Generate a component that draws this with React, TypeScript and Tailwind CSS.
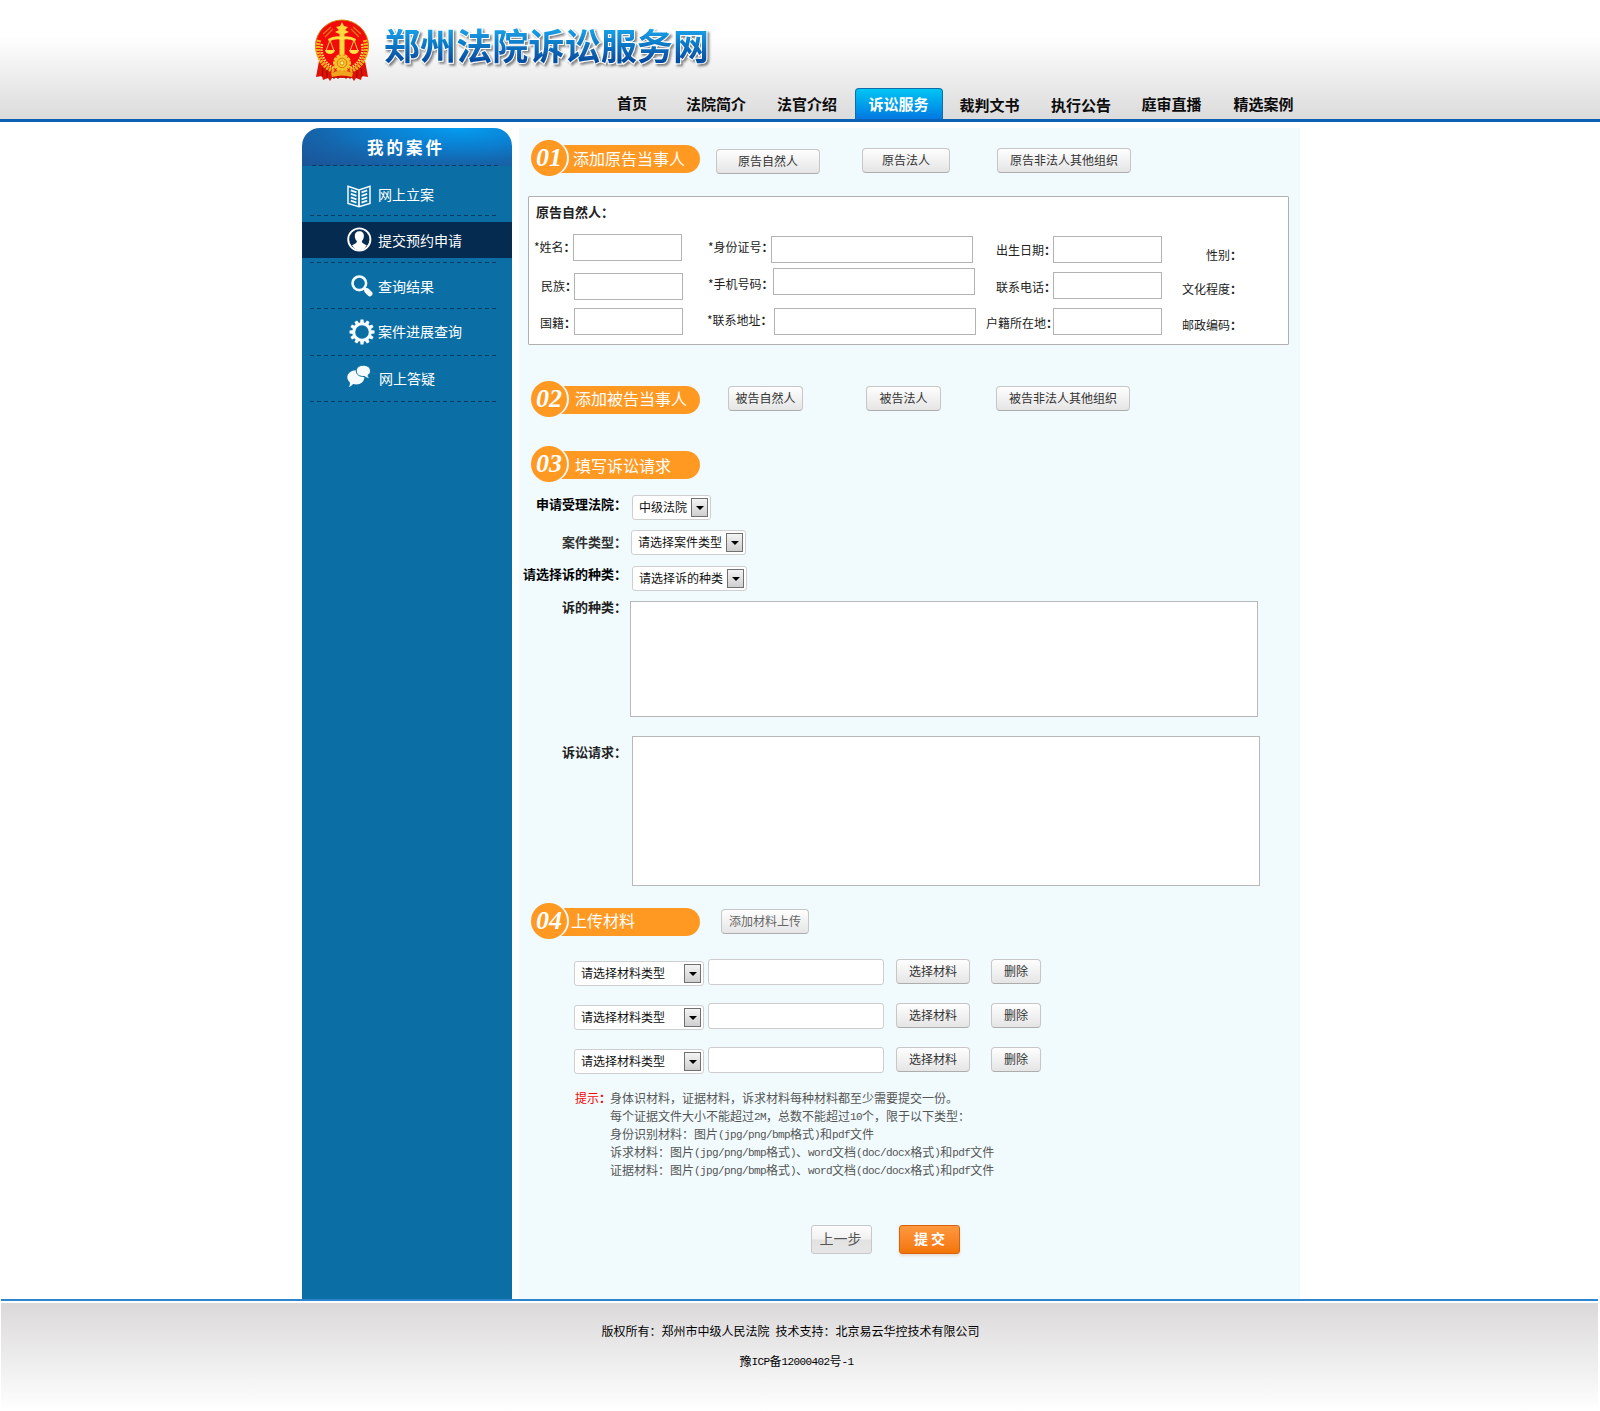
import React from "react";

const sans = "font-['Noto_Sans_CJK_SC','Liberation_Sans',sans-serif]";

/* Latin runs are set in a 6px-pitch monospace face between 12px Chinese glyphs. */
function Mixed({ text }: { text: string }) {
  return (
    <>
      {text.split(/([\x20-\x7e]+)/).map((part, i) =>
        /^[\x20-\x7e]+$/.test(part) ? (
          <span key={i} className="align-[1px] font-['Liberation_Mono',monospace] text-[11px] leading-none tracking-[-0.6px] whitespace-pre">{part}</span>
        ) : (
          <span key={i}>{part}</span>
        )
      )}
    </>
  );
}

/* Label text followed by a heavier full-width colon in its own one-em box. */
function Colon({ text }: { text: string }) {
  return (
    <>
      {text}
      <span className="inline-block w-[1em] text-left font-bold">：</span>
    </>
  );
}

function Emblem() {
  const teeth = Array.from({ length: 12 }, (_, i) => i * 30);
  return (
    <svg width="56" height="63" viewBox="0 0 56 63">
      <path d="M5 42 L2 58 L8 57 L9 61 L14 59 L16 62 L18 59 H38 L40 62 L42 59 L47 61 L48 57 L54 58 L51 42Z" fill="#e01208" />
      <path d="M9 49l-1 9M13 50l0 9M43 50l0 9M47 49l1 9M20 55v5M24 56v4M32 56v4M36 55v5" stroke="#8f0d05" strokeWidth="1" />
      <ellipse cx="28" cy="27" rx="26.5" ry="26" fill="#f30b0b" stroke="#d6850e" strokeWidth="1" />
      <path d="M5 21 C1 36 8 48 20 52 M51 21 C55 36 48 48 36 52" fill="none" stroke="#f2b21c" strokeWidth="4.5" strokeDasharray="2 1" />
      <path d="M8 25 C6 36 11 45 20 49 M48 25 C50 36 45 45 36 49" fill="none" stroke="#ffe45c" strokeWidth="2.5" strokeDasharray="1.5 1.2" />
      <path d="M9 15 L17 8 M11 18 L19 10 M47 15 L39 8 M45 18 L37 10" stroke="#dd7b14" strokeWidth="1.2" />
      <path d="M28 3 L30 7 L34 8 L31 11 L35 13 L30.5 15 L30.5 36 H25.5 L25.5 15 L21 13 L25 11 L22 8 L26 7Z" fill="#ffd83a" />
      <path d="M14 20 Q21 16 28 18 Q35 16 42 20 L41 22.5 Q34 19 28 21 Q22 19 15 22.5Z" fill="#ffdf45" />
      <path d="M16 21 L12 32 M16 21 L20 32 M40 21 L36 32 M40 21 L44 32" stroke="#ffcf3a" strokeWidth="1" />
      <path d="M11 31 H21 Q20 35 16 35 Q12 35 11 31Z M35 31 H45 Q44 35 40 35 Q36 35 35 31Z" fill="#ffdf45" />
      {teeth.map((a) => (
        <rect key={a} x="26.3" y="35" width="3.4" height="4" fill="#f7c32a" transform={`rotate(${a} 28 44)`} />
      ))}
      <circle cx="28" cy="44" r="7.5" fill="#f7c32a" />
      <circle cx="28" cy="44" r="4.8" fill="none" stroke="#d9780f" strokeWidth="1" />
      <circle cx="28" cy="44" r="2" fill="#ffec80" stroke="#d9780f" strokeWidth="0.8" />
      <path d="M17 54 Q28 50 39 54 L38 58 Q28 55 18 58Z" fill="#f0a51d" />
    </svg>
  );
}

function BookIcon() {
  return (
    <svg width="24" height="23" viewBox="0 0 24 23" fill="none" stroke="#f3f9fc" strokeWidth="1.5">
      <path d="M12 5 L1 1.2 V18.5 L12 21.8 L23 18.5 V1.2 Z" />
      <path d="M12 5 V21" strokeWidth="1.8" />
      <path d="M3.8 5.4l5.7 2M3.8 8.9l5.7 2M3.8 12.4l5.7 2M3.8 15.6l5.7 2M20.2 5.4l-5.7 2M20.2 8.9l-5.7 2M20.2 12.4l-5.7 2M20.2 15.6l-5.7 2" strokeWidth="1.7" />
    </svg>
  );
}

function UserIcon() {
  return (
    <svg width="25" height="25" viewBox="0 0 25 25" className="-mt-px">
      <circle cx="12.3" cy="12.5" r="11.1" fill="none" stroke="#fff" strokeWidth="1.9" />
      <path d="M12.3 4.2 C15.6 4.2 17.1 6.3 16.9 9.2 C16.8 11.4 16 13 14.8 14 C14.6 16.2 16.5 16.6 19.7 18.3 C17.8 21.6 15.3 23.2 12.3 23.2 C9.4 23.2 6.9 21.6 5 18.3 C8.2 16.6 10.1 16.2 9.9 14 C8.7 13 7.9 11.4 7.8 9.2 C7.6 6.3 9.1 4.2 12.3 4.2Z" fill="#fff" />
    </svg>
  );
}

function SearchIcon() {
  return (
    <svg width="22" height="22" viewBox="0 0 22 22" fill="none" stroke="#f5fbfe" className="-mt-[2px]">
      <circle cx="8.3" cy="8.3" r="6.8" strokeWidth="2.6" />
      <path d="M13 13 L15 15" strokeWidth="2.5" />
      <path d="M16 15.8 L18.8 18.6" strokeWidth="5.4" strokeLinecap="round" />
    </svg>
  );
}

function GearIcon() {
  const teeth = Array.from({ length: 12 }, (_, i) => i * 30);
  return (
    <svg width="26" height="26" viewBox="0 0 26 26">
      {teeth.map((a) => (
        <path key={a} d="M10.9 5 L11.5 0.5 H14.5 L15.1 5Z" fill="#f5fbfe" transform={`rotate(${a} 13 13)`} />
      ))}
      <circle cx="13" cy="13" r="8.3" fill="none" stroke="#f5fbfe" strokeWidth="3" />
    </svg>
  );
}

function ChatIcon() {
  return (
    <svg width="24" height="23" viewBox="0 0 24 23" className="-mt-[4px]">
      <path d="M9 5.2 C13.8 5.2 17.3 8.4 17.3 12.3 C17.3 16.5 13.7 19.5 9.5 19.5 C8 19.5 7 19.3 6 19 C5 20.4 3.8 21.6 1.8 22 C2.7 20.6 3.1 19 2.9 17.4 C1.3 16 0.3 14.5 0.3 12.3 C0.3 8.4 4.2 5.2 9 5.2Z" fill="#f5fbfe" />
      <path d="M16.3 0.3 C20.5 0.3 23.5 2.6 23.5 5.9 C23.5 7.9 22.4 9.3 21.1 10.1 C21.1 11.6 21.7 12.6 22.8 13.5 C20.5 13.5 18.9 12.8 17.9 11.5 C12.2 11.9 9.3 9.3 9.3 5.9 C9.3 2.6 12.2 0.3 16.3 0.3Z" fill="#f5fbfe" stroke="#0b6fa5" strokeWidth="1" />
    </svg>
  );
}

function Dashes({ className = "" }: { className?: string }) {
  return <div className={`h-px bg-[repeating-linear-gradient(90deg,#0a3c62_0_4px,transparent_4px_7px)] ${className}`} />;
}

const nav = [
  { label: "首页", cls: "ml-[617px] w-[31px] -mt-px" },
  { label: "法院简介", cls: "ml-[38px] w-[61px]" },
  { label: "法官介绍", cls: "ml-[30px] w-[61px]" },
];
const navAfter = [
  { label: "裁判文书", cls: "ml-[16.5px] w-[60px] pt-px" },
  { label: "执行公告", cls: "ml-[31.5px] w-[60px] pt-px" },
  { label: "庭审直播", cls: "ml-[30.5px] w-[60px]" },
  { label: "精选案例", cls: "ml-[32px] w-[61px]" },
];

function Header() {
  return (
    <header className="h-[122px] border-b-[3px] border-[#0b62b4] bg-[linear-gradient(180deg,#ffffff_0%,#ffffff_30%,#dcdbdc_100%)]">
      <div className="flex h-[88px] pl-[314px]">
        <div className="pt-[19px]"><Emblem /></div>
        <svg width="350" height="60" viewBox="0 0 350 60" className="mt-[16px] ml-[6px]">
          <defs>
            <linearGradient id="title" x1="0" y1="0" x2="0" y2="1">
              <stop offset="0.2" stopColor="#18a4ea" />
              <stop offset="0.8" stopColor="#064fa3" />
            </linearGradient>
            <filter id="shade" x="-5%" y="-20%" width="112%" height="150%">
              <feDropShadow dx="2" dy="2" stdDeviation="1.2" floodColor="#555" floodOpacity="0.7" />
            </filter>
          </defs>
          <text x="8" y="44" textLength="325" fontSize="36" fontWeight="bold" fontFamily="'Noto Sans CJK SC', sans-serif" fill="url(#title)" stroke="#fff" strokeWidth="2" paintOrder="stroke" filter="url(#shade)">
            郑州法院诉讼服务网
          </text>
        </svg>
      </div>
      <nav className="flex h-[31px] text-[15px] leading-[31px] font-bold whitespace-nowrap text-[#0c0c0c]">
        {nav.map((n) => <a key={n.label} className={n.cls}>{n.label}</a>)}
        <a className="ml-[17px] h-[31px] w-[88px] rounded-t-[4px] border border-b-0 border-[#0a6fa8] bg-linear-to-b from-[#04c5f2] to-[#0678e2] pr-px text-center leading-[29px] text-white">诉讼服务</a>
        {navAfter.map((n) => <a key={n.label} className={n.cls}>{n.label}</a>)}
      </nav>
    </header>
  );
}

function Sidebar() {
  const item = "flex items-center text-[14px] leading-[20px] text-white";
  return (
    <aside className="h-[1171px] w-[210px] bg-[#0b6fa5]">
      <div className="bg-white">
        <div className="flex h-[38px] flex-col rounded-t-[18px] bg-[radial-gradient(ellipse_at_75%_0%,#049cf0_0%,#0b7fd0_35%,#1565ab_65%,#1c5297_100%)]">
          <h2 className="h-[37px] pl-[65px] text-[16.5px] leading-[38px] font-bold tracking-[3px] text-white">我的案件</h2>
          <Dashes className="mr-[12px] ml-[10px]" />
        </div>
      </div>
      <div className={`${item} h-[49px] pt-[11px] pl-[45px]`}><BookIcon /><span className="-mt-[5px] ml-[7px]">网上立案</span></div>
      <Dashes className="mr-[13px] ml-[8px]" />
      <div className={`${item} mt-[6px] h-[36px] bg-[#062b50] pl-[45px]`}><UserIcon /><span className="ml-[6px]">提交预约申请</span></div>
      <Dashes className="mt-[4px] mr-[13px] ml-[8px]" />
      <div className={`${item} h-[45px] pt-[2px] pl-[49px]`}><SearchIcon /><span className="-mt-[2px] ml-[5px]">查询结果</span></div>
      <Dashes className="mr-[13px] ml-[8px]" />
      <div className={`${item} h-[46px] pl-[47px]`}><GearIcon /><span className="-mt-[2px] ml-[3px]">案件进展查询</span></div>
      <Dashes className="mr-[13px] ml-[8px]" />
      <div className={`${item} h-[45px] pl-[45px]`}><ChatIcon /><span className="-mt-[2px] ml-[8px]">网上答疑</span></div>
      <Dashes className="mr-[13px] ml-[8px]" />
    </aside>
  );
}

function Badge({ num, text, textCls = "" }: { num: string; text: string; textCls?: string }) {
  return (
    <div className="flex h-[36px] w-[169px] items-start">
      <div className="relative z-10 flex size-[36px] shrink-0 items-center justify-center rounded-full bg-[#ff9922] font-['Liberation_Serif',serif] text-[26px] leading-none font-bold text-white italic shadow-[2px_0_0_#f1fbfe]">
        {num}
      </div>
      <div className={`mt-[5px] -ml-[10px] h-[28px] flex-1 rounded-r-full bg-[#ff9922] text-[16px] whitespace-nowrap text-white ${textCls}`}>{text}</div>
    </div>
  );
}

function Btn({ children, className = "" }: { children: React.ReactNode; className?: string }) {
  return (
    <button className={`block h-[25px] shrink-0 rounded-[4px] border border-[#c6c6c6] border-b-[#adadad] bg-linear-to-b from-[#fefefe] to-[#e6e5e6] pb-[2px] text-center text-[12px] leading-[21px] whitespace-nowrap ${className}`}>
      {children}
    </button>
  );
}

function Field({ label, className, labelCls, inputCls }: { label: string; className: string; labelCls: string; inputCls?: string }) {
  return (
    <label className={`flex text-[12px] leading-[25px] whitespace-nowrap text-[#222] ${className}`}>
      <span className={`h-[27px] shrink-0 ${labelCls}`}><Colon text={label} /></span>
      {inputCls && <span className={`h-[27px] shrink-0 border border-[#b3b3b3] bg-white ${inputCls}`} />}
    </label>
  );
}

function Select({ children, className = "" }: { children: React.ReactNode; className?: string }) {
  return (
    <div className={`flex h-[25px] shrink-0 items-center justify-between rounded-[3px] border border-[#cfcfcf] bg-white pr-[2px] pl-[6px] text-[12px] whitespace-nowrap text-[#111] ${className}`}>
      <span className="h-[23px] leading-[21px]">{children}</span>
      <span className="flex h-[19px] w-[17px] items-center justify-center border border-[#707070] bg-linear-to-b from-[#f4f4f4] to-[#cfcfcf]">
        <span className="border-x-[4px] border-t-[4px] border-x-transparent border-t-black" />
      </span>
    </div>
  );
}

function Plaintiff() {
  return (
    <section className="mt-[20px] ml-[9px] h-[149px] w-[761px] rounded-[1px] border border-[#b0b0b0] bg-white">
      <h3 className="mt-[5px] ml-[7px] h-[20px] text-[13px] leading-[20px] font-bold text-[#222]"><Colon text="原告自然人" /></h3>
      <div className="-mt-[4px] flex">
        <div className="w-[178px]">
          <Field label="*姓名" className="mt-[16px]" labelCls="w-[44px] pl-[5px]" inputCls="w-[109px]" />
          <Field label="民族" className="mt-[12px]" labelCls="w-[45px] pl-[12px]" inputCls="w-[109px]" />
          <Field label="国籍" className="mt-[8px]" labelCls="w-[45px] pl-[11px] pt-[2px]" inputCls="w-[109px]" />
        </div>
        <div className="w-[279px]">
          <Field label="*身份证号" className="mt-[18px]" labelCls="w-[64px] pl-[1px] -mt-[2px]" inputCls="w-[202px]" />
          <Field label="*手机号码" className="mt-[5px]" labelCls="w-[66px] pl-[1px] pt-[3px]" inputCls="w-[202px]" />
          <Field label="*联系地址" className="mt-[13px]" labelCls="w-[67px] -mt-px" inputCls="w-[202px]" />
        </div>
        <div className="w-[196px]">
          <Field label="出生日期" className="mt-[18px]" labelCls="w-[67px] pl-[10px] pt-px" inputCls="w-[109px]" />
          <Field label="联系电话" className="mt-[9px]" labelCls="w-[67px] pl-[10px] pt-[2px]" inputCls="w-[109px]" />
          <Field label="户籍所在地" className="mt-[9px]" labelCls="w-[67px] pt-[2px]" inputCls="w-[109px]" />
        </div>
        <div className="w-[60px]">
          <Field label="性别" className="mt-[24px]" labelCls="pl-[24px]" />
          <Field label="文化程度" className="mt-[7px]" labelCls="" />
          <Field label="邮政编码" className="mt-[9px]" labelCls="" />
        </div>
      </div>
    </section>
  );
}

function FormLabel({ children, className = "" }: { children: string; className?: string }) {
  return (
    <span className={`w-[108px] shrink-0 text-right text-[13px] leading-[20px] font-bold whitespace-nowrap ${className}`}>
      <Colon text={children} />
    </span>
  );
}

function UploadRow({ className }: { className: string }) {
  return (
    <div className={`flex h-[27px] pl-[55px] ${className}`}>
      <Select className="mt-[2px] w-[130px]">请选择材料类型</Select>
      <span className="ml-[4px] h-[26px] w-[176px] rounded-[3px] border border-[#cdcdcd] bg-white" />
      <Btn className="ml-[12px] w-[74px] text-[#333]">选择材料</Btn>
      <Btn className="ml-[21px] w-[50px] text-[#333]">删除</Btn>
    </div>
  );
}

const tips = [
  "身体识材料，证据材料，诉求材料每种材料都至少需要提交一份。",
  "每个证据文件大小不能超过2M，总数不能超过10个，限于以下类型：",
  "身份识别材料：图片(jpg/png/bmp格式)和pdf文件",
  "诉求材料：图片(jpg/png/bmp格式)、word文档(doc/docx格式)和pdf文件",
  "证据材料：图片(jpg/png/bmp格式)、word文档(doc/docx格式)和pdf文件",
];

export default function App() {
  return (
    <div className={`h-[1411px] w-[1600px] overflow-hidden bg-white ${sans}`}>
      <Header />
      <div className="flex pt-[6px] pl-[302px]">
        <Sidebar />
        <main className="ml-[7px] h-[1171px] w-[781px] bg-[#f1fbfe]">
          <div className="flex h-[48px] pt-[12px] pl-[12px]">
            <Badge num="01" text="添加原告当事人" textCls="pl-[16px] leading-[26px]" />
            <Btn className="mt-[9px] ml-[16px] w-[104px] text-[#333]">原告自然人</Btn>
            <Btn className="mt-[8px] ml-[42px] w-[88px] text-[#333]">原告法人</Btn>
            <Btn className="mt-[8px] ml-[47px] w-[134px] text-[#333]">原告非法人其他组织</Btn>
          </div>
          <Plaintiff />
          <div className="mt-[36px] flex h-[37px] pl-[12px]">
            <Badge num="02" text="添加被告当事人" textCls="pl-[18px] leading-[25px]" />
            <Btn className="mt-[5px] ml-[28px] w-[75px] text-[#333]">被告自然人</Btn>
            <Btn className="mt-[5px] ml-[63px] w-[75px] text-[#333]">被告法人</Btn>
            <Btn className="mt-[5px] ml-[55px] w-[134px] text-[#333]">被告非法人其他组织</Btn>
          </div>
          <div className="mt-[28px] h-[37px] pl-[12px]">
            <Badge num="03" text="填写诉讼请求" textCls="pl-[18px] leading-[28px]" />
          </div>
          <div className="mt-[12px] flex">
            <FormLabel className="-mt-px text-black">申请受理法院</FormLabel>
            <Select className="ml-[5px] w-[79px]">中级法院</Select>
          </div>
          <div className="mt-[10px] flex">
            <FormLabel className="mt-[2px] text-[#333]">案件类型</FormLabel>
            <Select className="ml-[4px] w-[115px]">请选择案件类型</Select>
          </div>
          <div className="mt-[11px] flex">
            <FormLabel className="-mt-[2px] text-black">请选择诉的种类</FormLabel>
            <Select className="ml-[5px] w-[115px]">请选择诉的种类</Select>
          </div>
          <div className="mt-[10px] flex">
            <FormLabel className="-mt-[4px] text-[#222]">诉的种类</FormLabel>
            <div className="ml-[3px] h-[116px] w-[628px] border border-[#b8b8b8] bg-white" />
          </div>
          <div className="mt-[19px] flex">
            <FormLabel className="mt-[6px] text-[#222]">诉讼请求</FormLabel>
            <div className="ml-[5px] h-[150px] w-[628px] border border-[#b8b8b8] bg-white" />
          </div>
          <div className="mt-[17px] flex h-[36px] pl-[12px]">
            <Badge num="04" text="上传材料" textCls="pl-[14px] leading-[25px]" />
            <Btn className="mt-[6px] ml-[21px] w-[88px] text-[#666]">添加材料上传</Btn>
          </div>
          <UploadRow className="mt-[20px]" />
          <UploadRow className="mt-[17px]" />
          <UploadRow className="mt-[17px]" />
          <div className="mt-[15px] flex pl-[56px] text-[12px] leading-[18px] text-[#555]">
            <span className="w-[35px] shrink-0 whitespace-nowrap text-[#f60505]"><Colon text="提示" /></span>
            <div>
              {tips.map((t) => <p key={t} className="h-[18px] whitespace-nowrap"><Mixed text={t} /></p>)}
            </div>
          </div>
          <div className="mt-[46px] flex pl-[292px]">
            <button className="h-[29px] w-[61px] rounded-[3px] border border-[#c8c8c8] bg-[linear-gradient(180deg,#fdfdfd_0%,#f1f1f1_49%,#e2e2e2_51%,#e6e6e6_100%)] pr-[2px] pb-[2px] text-[14px] leading-[25px] text-[#555]">上一步</button>
            <button className="ml-[27px] h-[29px] w-[61px] rounded-[3px] border border-[#d9610b] bg-linear-to-b from-[#ff983d] to-[#f27502] pb-[2px] text-[14px] leading-[25px] font-bold text-white shadow-[0_2px_3px_#e8ddd4]">提 交</button>
          </div>
        </main>
      </div>
      <footer className="mr-[2px] ml-px border-t-2 border-[#2f84d0] pt-[2px]">
        <div className="h-[108px] bg-linear-to-b from-[#dbd9da] to-white pt-[18px] text-[12px] leading-[20px] whitespace-pre text-black">
          <p className="h-[20px] pl-[600.5px]"><Mixed text="版权所有：郑州市中级人民法院 技术支持：北京易云华控技术有限公司" /></p>
          <p className="mt-[10px] h-[20px] pl-[738.5px]"><Mixed text="豫ICP备12000402号-1" /></p>
        </div>
      </footer>
    </div>
  );
}
